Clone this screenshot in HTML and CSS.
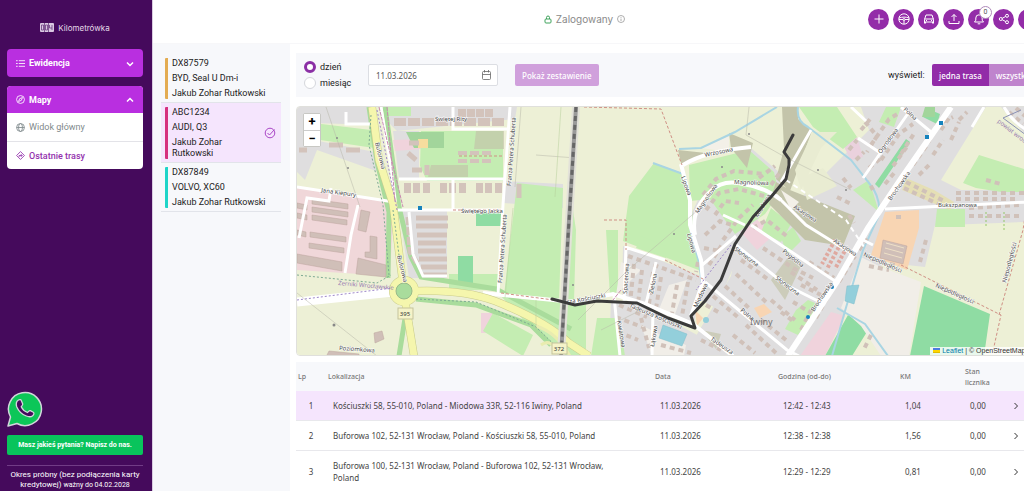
FILE: index.html
```html
<!DOCTYPE html>
<html lang="pl">
<head>
    <meta charset="UTF-8">
    <meta name="viewport" content="width=device-width, initial-scale=1.0">
    <title>Kilometrówka</title>
    <link rel="stylesheet" href="styles.css">
</head>
<body>
<div class="app">
    <aside class="sidebar">
        <div class="brand">
            <svg width="14" height="9" viewBox="0 0 14 9"><rect width="14" height="9" rx="1" fill="#d9c8e2"/><path d="M1.5 2h2v5h-2zM5.5 2h2v5h-2zM9.5 2v3h2.5M12 2v5M4.500 0v9M8.500 0v9" fill="none" stroke="#6b3a80" stroke-width=".8"/></svg>
            <span>Kilometrówka</span>
        </div>

        <nav>
            <div class="menu">
                <button class="menu-head" type="button">
                    <svg class="icon" viewBox="0 0 16 16"><path d="M5 3h11M5 8h11M5 13h11M0 3h3M0 8h3M0 13h3"/></svg>
                    <span>Ewidencja</span>
                    <svg class="chevron" viewBox="0 0 8 8"><path d="M1 3l3 3 3-3"/></svg>
                </button>
            </div>
            <div class="menu open">
                <button class="menu-head" type="button">
                    <svg class="icon" viewBox="0 0 16 16"><circle cx="8" cy="8" r="7"/><path d="M11.5 4.5l-2 5-5 2 2-5z"/></svg>
                    <span>Mapy</span>
                    <svg class="chevron" viewBox="0 0 8 8"><path d="M1 6l3-3 3 3"/></svg>
                </button>
                <a class="menu-link" href="#">
                    <svg class="icon" viewBox="0 0 16 16"><circle cx="8" cy="8" r="7"/><ellipse cx="8" cy="8" rx="3.5" ry="7"/><path d="M1 8h14"/></svg>
                    Widok główny
                </a>
                <a class="menu-link active" href="#">
                    <svg class="icon" viewBox="0 0 16 16"><path d="M8 1l7 7-7 7-7-7zM5.500 10.500V8h5M8.500 5.500L11 8l-2.500 2.500"/></svg>
                    Ostatnie trasy
                </a>
            </div>
        </nav>

        <div class="support">
            <a class="whatsapp" href="#" aria-label="WhatsApp">
                <svg width="36" height="36" viewBox="0 0 36 36"><path d="M1 35l2.500-9A16.500 16.500 0 1 1 10 32.500z" fill="#0cc658" stroke="#d3d5dc" stroke-width="1.5" stroke-linejoin="round"/><path d="M11.500 9c1.500-.8 2.500-.3 3 1l1.200 3c.3 1-1.200 2-1.500 2.800 1.300 2.800 3.300 4.600 6.300 5.700.9-.5 1.700-2.200 2.800-1.800l3 1.500c1.200.7.5 2.600-.6 3.500-1.800 1.500-4.200 1.200-6.400.3-4.300-1.700-7.700-4.700-9.500-9-.9-2.700-.8-5.500 1.700-7z" fill="#450a5c" stroke="#d3d5dc" stroke-width="1.3"/></svg>
            </a>
            <button class="ask" type="button">Masz jakieś pytania? Napisz do nas.</button>
            <p class="trial">Okres próbny (bez podłączenia karty kredytowej) <small>ważny do 04.02.2028</small></p>
        </div>
    </aside>

    <div class="page">
        <header class="topbar">
            <div class="status">
                <svg width="8" height="9" viewBox="0 0 8 9" fill="none" stroke="#3fa35c"><rect x="1" y="4" width="6" height="4" rx="1"/><path d="M2.500 4V2.500a1.500 1.500 0 0 1 3 0V4"/></svg>
                <span>Zalogowany</span>
                <svg width="8" height="8" viewBox="0 0 8 8" fill="none" stroke="#999" stroke-width=".8"><circle cx="4" cy="4" r="3.5"/><path d="M4 3.600V6M4 2v.8"/></svg>
            </div>
            <div class="actions">
                <button type="button" aria-label="Dodaj"><svg viewBox="0 0 12 12"><path d="M6 1.500v9M1.500 6h9"/></svg></button>
                <button type="button" aria-label="Kierowcy"><svg viewBox="0 0 12 12"><circle cx="6" cy="6" r="5.2"/><circle cx="6" cy="6.500" r="1"/><path d="M1 5c3-1.200 7-1.200 10 0M5 6.500H1M7 6.500h4M6 7.500V11"/></svg></button>
                <button type="button" aria-label="Pojazdy"><svg viewBox="0 0 12 12"><path d="M1.500 10.500v-4L3 2h6l1.500 4.500v4M1.500 6h9M1.500 9h9M3 7.500h1M8 7.500h1M2.500 9v1.500M9.500 9v1.500"/></svg></button>
                <button type="button" aria-label="Eksport"><svg viewBox="0 0 12 12"><path d="M6 8V1.500M3.500 4L6 1.500 8.500 4M1 8v2.500h10V8"/></svg></button>
                <button type="button" aria-label="Powiadomienia"><svg viewBox="0 0 12 12"><path d="M1.500 9h9L9.200 7.200V5a3.200 3.200 0 0 0-6.400 0v2.200zM4.700 10.800h2.600"/></svg><span class="badge">0</span></button>
                <button type="button" aria-label="Udostępnij"><svg viewBox="0 0 12 12"><circle cx="2.800" cy="6" r="1.5"/><circle cx="9" cy="2.800" r="1.5"/><circle cx="9" cy="9.200" r="1.5"/><path d="M4.200 5.300l3.400-1.800M4.200 6.700l3.400 1.800"/></svg></button>
                <button type="button" aria-label="Konto"><svg viewBox="0 0 12 12"><circle cx="6" cy="4" r="2"/><path d="M2 11c0-5 8-5 8 0"/></svg></button>
            </div>
        </header>

        <div class="columns">
            <section class="vehicles">
                <ul>
                    <li class="vehicle orange">
                        <div><p>DX87579</p><p>BYD, Seal U Dm-i</p><p>Jakub Zohar Rutkowski</p></div>
                    </li>
                    <li class="vehicle pink selected">
                        <div><p>ABC1234</p><p>AUDI, Q3</p><p>Jakub Zohar Rutkowski</p></div>
                        <svg class="check" viewBox="0 0 12 12"><circle cx="6" cy="6" r="4.8"/><path d="M3.500 6l2 2 5-5.500"/></svg>
                    </li>
                    <li class="vehicle cyan">
                        <div><p>DX87849</p><p>VOLVO, XC60</p><p>Jakub Zohar Rutkowski</p></div>
                    </li>
                </ul>
            </section>

            <main class="content">
                <form class="filters">
                    <div class="period">
                        <label><input type="radio" name="period" checked>dzień</label>
                        <label><input type="radio" name="period">miesiąc</label>
                    </div>
                    <div class="date-box">
                        <input type="text" value="11.03.2026" aria-label="Data">
                        <svg width="9" height="10" viewBox="0 0 9 10" fill="none" stroke="#666" stroke-width=".8"><rect x=".5" y="1.5" width="8" height="8" rx="1"/><path d="M.5 4.500h8M2.500 0v2.500M6.500 0v2.500"/></svg>
                    </div>
                    <button class="show" type="button">Pokaż zestawienie</button>
                    <span class="display-label">wyświetl:</span>
                    <div class="toggle">
                        <button class="on" type="button">jedna trasa</button>
                        <button type="button">wszystkie trasy</button>
                    </div>
                </form>

                <div class="map">
                    <svg class="tiles" viewBox="296 107 772 248" preserveAspectRatio="xMinYMin slice">
                        <rect x="296" y="107" width="772" height="249" fill="#edf0d6"/>

                        <!-- built-up areas -->
                        <g fill="#dfdedf">
                            <path d="M296 107h75l5 18-64-2-10 15 72 14 4 20-62-22-12 30-8-8z"/>
                            <path d="M386 107h130l-2 12-118 12-8-8zM392 131h26v47h-20z"/>
                            <path d="M503 181l59 3v24l-59-5zM398 210h48v68h-38z"/>
                            <path d="M690 215l10-22 50-45 35 30-40 60-30 70-40-20 25-10z"/>
                            <path d="M622 246l78 30-7 50-72-30zM610 300l30 5 60 32 30 19H608z"/>
                            <path d="M738 235l50-25 80-80-8-23h125l-45 73 20 10h64v32l-104 4-50 50-60 90h-70l-45-30 35-60z"/>
                            <path d="M1000 107h68v35l-44-8zM918 225h16l-10 42-18-2z"/>
                        </g>

                        <!-- industrial and retail -->
                        <path d="M296 188l97 15-4 73-93-6z" fill="#f0d7d9"/>
                        <path d="M392 140l28-1v10l-26 2zM740 232l16-12 18 14-18 16zM830 312l14 4-20 40h-25zM480 313h12v20h-12z" fill="#f0d3dc"/>
                        <path d="M842 145l14-8 6 20-12 3z" fill="#ead1dd"/>

                        <!-- grass -->
                        <g fill="#c4edb2">
                            <path d="M312 123l58 7 3 18-67-10z"/>
                            <path d="M382 107h28v9h-25zM420 131h82v50h-76l-7-15z"/>
                            <path d="M516 183l46 5-4 112-55-5z"/>
                            <path d="M653 163l28 10 9 18 2 35 8 45-78-30 6-45z"/>
                            <path d="M688 165l60-15 25 22 5 22-14 20-30 20-25-35-20 2z"/>
                            <path d="M798 107h38l20 30-14 12-30-22zM885 107h15l-7 20-15-5zM868 180l10 32-26-22z"/>
                            <path d="M978 155l90 28v9h-68l-25-4-13-5zM936 209h28v18h-30z"/>
                            <path d="M500 296l62 6-4 48-30-24zM492 313l40 22-10 21-40-25zM567 300l18 3v53h-25zM640 236l25 10v12l-30-10zM575 230l-2 72h-8l3-120z"/>
                            <path d="M448 274h50v16h-50zM795 310l12-10 12 5-22 30-13-6zM770 208l20 16-10 18-20-10zM605 230h12v65l-8 1z"/>
                            <path d="M780 237l12-10 8 14-14 14zM596 318h22l6 38h-34z"/>
                        </g>
                        <g fill="#8fdca3">
                            <path d="M905 139l4 3-31 46-4-4zM847 315l22 12-18 29h-27zM457 256h15v28h-15zM475 213h26v13h-26z"/>
                            <path d="M923 286l66 28-6 42h-74zM925 108l14 6-3 10-14-7z"/>
                        </g>
                        <path d="M405 132h38v16h-30zM924 107h10v10h-13z" fill="#a2d59b"/>
                        <path d="M417 139h10v9h-10z" fill="#f6dd9e"/>

                        <!-- scrub and farm yards -->
                        <g fill="#c3c4aa">
                            <path d="M677 150l28 3-24 14zM728 133l24 10-6 25-16-20z"/>
                            <path d="M781 107h16v12l14 12-22 60-14-12 8-30zM775 182l14 8 65 26-12 30-38-6-36-36z"/>
                            <path d="M430 165h37v12h-40zM475 131h28v18h-30zM770 280l18-24 12 10-16 34zM700 330l20 4-5 15z" opacity=".7"/>
                        </g>
                        <path d="M884 212l34-2v18l-12 42-36-15zM694 310l8 8-6 8zM753 308l10-4 8 8-12 6z" fill="#f8d5b3"/>
                        <path d="M860 257l20 10 40 15-12 74h-28l-20-30-20-18zM620 262l20 8-25 25zM668 285l18-5-14 40-16-6zM640 325l20 10 25 10-2 11h-32z" fill="#f1eee8"/>
                        <path d="M700 148l28-12v16zM780 190l18 12-8 8z" fill="#f3f0e8"/>
                        <path d="M905 178l28 12 20 12-4 8-48-20z" fill="#e5dfb5"/>
                        <path d="M836 132l-16 16-20 42-6-20 18-38zM800 178l22-10 14 18-30 14z" fill="#e9ecd2"/>

                        <!-- green verges -->
                        <g fill="none" stroke="#a9dc9c" stroke-width="5">
                            <path d="M368 107l8 55 12 50-1 66"/>
                            <path d="M384 107l14 100 12 50 10 20 75 12 75 40M415 299l60 6 55 20 20 20M398 356l8-50 8 50"/>
                        </g>

                        <!-- water -->
                        <g fill="none" stroke="#a9d5e3" stroke-width="2">
                            <path d="M797 107q-2 14 10 20l43 33 18 23q12 14 10 32l-16 35-9 30-22 76"/>
                            <path d="M836 308l28 16 23 32M678 149l22-1 34-16 42-25M652 163l30 11M690 200l-1 28 9 35 3 20"/>
                        </g>
                        <path d="M846 286l12-1-5 19-9-3zM662 325l24 9-5 12-23-8z" fill="#93cfdb" stroke="#7fbccb" stroke-width=".5"/>
                        <circle cx="705" cy="320" r="3" fill="#93cfdb"/>

                        <!-- large halls -->
                        <g fill="#d0bfb8" stroke="#bda49e" stroke-width=".5">
                            <path d="M311 199l36 5v5l-36-5zM311 207l36 5v5l-36-5zM311 215l35 5v5l-35-5zM309 232l36 5v5l-36-5zM308 243l35 5v5l-35-5z"/>
                            <path d="M296 203l10 2v5l-10-2zM296 213l10 2v5l-10-2zM296 230l9 2v5l-9-2zM296 254l45 8v9l-45-8zM360 210l9 2-4 20-8-2z"/>
                            <path d="M369 236l7 1v22l-12-2v-5h5zM357 258l28 7v12l-30-3z"/>
                            <path d="M373 333l8-2 2 8-9 4zM328 351l30 3v3h-33zM882 240l24 6-4 18-23-6z"/>
                        </g>
                        <path d="M885 243l18 5M884 248l18 5M883 253l18 5" stroke="#eee0c7" stroke-width="1"/>

                        <!-- houses, row by row -->
                        <g fill="none" stroke="#d3c3bb" stroke-width="5">
                            <path d="M393 122h112" stroke-width="8" stroke-dasharray="12 2"/>
                            <path d="M457 113h36" stroke-width="8" stroke-dasharray="8 1"/>
                            <path d="M403 188h101" stroke-width="10" stroke-dasharray="7 2 7 3 7 10"/>
                            <path d="M457 153h34M457 161h34" stroke-width="4" stroke-dasharray="9 3"/>
                            <path d="M415 218h32M415 226h32M416 235h30M417 243h28M417 251h28M418 259h28M420 267h26M422 275h24"/>
                            <path d="M407 217l2 35 8 12" stroke-width="5" stroke-dasharray="8 2"/>
                            <path d="M408 143h10M407 153l8 7M411 170h10M426 165v10M518 184v14M298 150h8M328 145h14M345 150h14"/>
                        </g>
                        <g fill="none" stroke="#d0c1b9" stroke-width="4" stroke-dasharray="5 4">
                            <path d="M702 195l13-16 18-8 30 3M705 210l13-17 20-4 25 7M714 215l10-14 14 2M704 235l15-14 12 4M722 240l16-22 14-13M758 178l16-12M770 185l10-14M703 248l16 3M708 265l14-22"/>
                            <path d="M627 256l68 24M633 264l-4 40M641 270l-4 34M652 272l-5 40M660 277l-6 38M687 282l-6 34M676 285l-5 28M697 262l-2 10"/>
                            <path d="M618 305l28 12M615 317l26 10M617 332l20 8M640 318l8 30M660 345l30 8M705 305l14 8M700 340l20 10M712 296l26 22M724 286l24 22M735 274l30 28M740 260l28 20M732 335l22 18M745 325l30 28M760 320l25 20M770 300l24 20"/>
                            <path d="M752 228l14-8 22 18M762 248l30 20 20 10M790 272l26 18M808 262l25 16M800 285l20 10M792 302l15 9M800 330l10-20M815 318l14-25M838 282l16-26M858 250l9-13M780 312l12 9"/>
                            <path d="M864 122l12 14-10 16M870 145l18-26 10-6M880 160l18-26 14-10M892 166l16-22M900 154l14-22M868 168l12-10M842 178l8 10M836 197l16 8M848 215l5 8M872 190l-4-8M884 184l10-12M860 130l10-12"/>
                            <path d="M912 165l14-20 10-20 16-8M918 175l12-12M932 155l10-15M950 140l8-18M940 130l8-12M958 120l8-8M955 193h70M955 199h60M985 180l15 4M968 208l50-3M968 216h50M895 217h8M925 240l-6 22M868 266l20 4M880 262l18 4"/>
                            <path d="M905 182l40 20M903 188l34 16M1008 112l14 12M1015 108l9 8M848 150l8-10M855 160l8-8M870 335l-8 16"/>
                        </g>
                        <path d="M840 243l-14 26M834 240l-13 24M846 247l-12 22" stroke="#dfa9a0" stroke-width="4" stroke-dasharray="3 2" fill="none"/>

                        <!-- local roads -->
                        <g fill="none" stroke="#fff" stroke-width="3">
                            <path d="M296 187l97 15M396 210h107M452 107v22h55M509 107l-7 98-5 90M398 179h105M452 179v30M408 212l4 42 10 22h24"/>
                            <path d="M296 302l96-10" stroke-width="9"/>
                            <path d="M380 107l10 60 5 40M330 188l-2 13-22-3-8 40M357 205l-7 30-6 38M345 112v12h24"/>
                            <path d="M482 293l90 9 40-8 32 10 48 20 40 32" stroke-width="4"/>
                            <path d="M680 164l9 36 0 25 11 35 2 22-12 34M682 165q22-14 68-18M694 235q-5-25 16-44 12-12 32-7 22 3 38 16" stroke-width="4"/>
                            <path d="M625 246l-2 58M624 247l40 13M655 262l-10 42M613 296l6 60M652 310l-1 46M704 282l82 68 12 6"/>
                            <path d="M735 245l50 40 36 18M750 225l60 40 24 16M775 195l30 30 45 28M700 266l35-30M722 215l22 10"/>
                            <path d="M950 107l-50 72-33 49-30 52-50 76" stroke-width="6"/>
                            <path d="M908 112l-46 66M900 107l30 25M884 209l184-9M810 130l-30 52M857 138l24 16M850 107l15 14M983 107l-12 20M872 245l-12-6"/>
                            <path d="M785 180l60 40 20 30" stroke-width="2" stroke-dasharray="5 4"/>
                            <path d="M1003 107q12 22 40 30"/>
                        </g>

                        <!-- main road with the roundabout -->
                        <g fill="none" stroke="#c9cb8e" stroke-width="8">
                            <path d="M371 107l7 53 14 44 5 40 5 40M412 291q50-2 82 10 50 20 74 42l20 13M404 300l9 56"/>
                            <circle cx="403" cy="291" r="11"/>
                        </g>
                        <g fill="none" stroke="#f5f6ad" stroke-width="7">
                            <path d="M371 107l7 53 14 44 5 40 5 40M412 291q50-2 82 10 50 20 74 42l20 13M404 300l9 56"/>
                            <circle cx="403" cy="291" r="11"/>
                        </g>
                        <circle cx="403" cy="291" r="8" fill="#a9dc9c" stroke="#98ba8b"/>
                        <path d="M535 326q20 6 34 30M540 345q10-8 20 11" fill="none" stroke="#e9ecb0" stroke-width="3"/>

                        <!-- paths and boundaries -->
                        <g fill="none" stroke-width="1">
                            <path d="M583 107l77 2 21 56M458 156h44M603 220h22v30M900 265l100 50-8 36h20M998 315l24-85 6-40M664 260l40 20M500 293l60 8M452 210h48" stroke="#cf8f84" stroke-dasharray="3 2"/>
                            <path d="M296 300l95-12M730 245l-35 45M376 110l12 60 8 40" stroke="#9d86c9" stroke-dasharray="2 2"/>
                            <path d="M370 115l-2 30 14 60 6 70M392 210l8 60M415 299l60 3 60 25 30 29M296 275l80 8 14-8" stroke="#7eaa93" stroke-dasharray="2 2"/>
                            <path d="M378 107l24 100M386 107l8 95M620 290l-8 10" stroke="#c88bb0" stroke-dasharray="4 1"/>
                            <path d="M325 107l34 100M296 293l80 63M748 107l-3 28 39 22M577 320l50-50 70-60M790 160l60 30M535 155l40 3M520 107l-6 80M600 330l40-20" stroke="#b6b6a8" stroke-width=".5"/>
                            <path d="M1003 212v20M985 212v15" stroke="#94c866" stroke-dasharray="2 2"/>
                            <path d="M1020 110l-18 8 54 40" stroke="#8b92b5"/>
                            <path d="M512 208l-8 90M535 300v30M560 107l-6 90" stroke="#b5cf9b" stroke-width=".5"/>
                        </g>

                        <!-- railway -->
                        <path d="M575 107l-8 130-7 119" fill="none" stroke="#e3e2d9" stroke-width="8"/>
                        <path d="M575 107l-8 130-7 119" fill="none" stroke="#9a9a9a" stroke-width="4"/>
                        <path d="M575 107l-8 130-7 119" fill="none" stroke="#666" stroke-width="3" stroke-dasharray="5 4"/>

                        <!-- stops -->
                        <g fill="#1683bd">
                            <path d="M417 206h4v4h-4zM938 121h4v4h-4zM924 135h4v4h-4z"/>
                            <circle cx="831" cy="287" r="2"/><circle cx="807" cy="317" r="2"/>
                        </g>
                        <g fill="#888"><circle cx="336" cy="138" r="1"/><circle cx="347" cy="168" r="1"/><circle cx="333" cy="325" r="1.5"/><circle cx="748" cy="134" r="1"/><circle cx="721" cy="167" r="1"/><circle cx="817" cy="170" r="1"/><circle cx="845" cy="190" r="1"/><circle cx="572" cy="285" r="1"/><circle cx="673" cy="234" r="1"/></g>

                        <g class="street">
                            <text x="434" y="121">Świętej Rity</text>
                            <text x="460" y="213">Świętego Jacka</text>
                            <text transform="translate(320 192) rotate(8)">Jana Kiepury</text>
                            <text transform="translate(510 186) rotate(-86)">Franza Petera Schuberta</text>
                            <text transform="translate(501 283) rotate(-86)">Franza Petera Schuberta</text>
                            <text transform="translate(374 143) rotate(76)">Buforowa</text>
                            <text transform="translate(396 256) rotate(76)">Buforowa</text>
                            <text transform="translate(338 350) rotate(4)">Poziomkowa</text>
                            <text transform="translate(704 157) rotate(-12)">Wrzosowa</text>
                            <text transform="translate(733 184) rotate(2)">Magnoliowa</text>
                            <text transform="translate(697 214) rotate(-55)">Magnoliowa</text>
                            <text transform="translate(680 177) rotate(70)">Lipowa</text>
                            <text transform="translate(686 234) rotate(75)">Lipowa</text>
                            <text transform="translate(757 218) rotate(-60)">Miodowa</text>
                            <text transform="translate(696 308) rotate(-65)">Miodowa</text>
                            <text transform="translate(792 208) rotate(33)">Akacjowa</text>
                            <text transform="translate(832 242) rotate(33)">Akacjowa</text>
                            <text transform="translate(781 252) rotate(38)">Pogodna</text>
                            <text transform="translate(733 250) rotate(37)">Słoneczna</text>
                            <text transform="translate(774 279) rotate(37)">Słoneczna</text>
                            <text transform="translate(739 311) rotate(40)">Polna</text>
                            <text transform="translate(902 110) rotate(42)">Polna</text>
                            <text transform="translate(880 154) rotate(-54)">Ogrodowa</text>
                            <text transform="translate(890 201) rotate(-55)">Brochowska</text>
                            <text transform="translate(813 312) rotate(-56)">Brochowska</text>
                            <text x="937" y="207">Bukszpanowa</text>
                            <text transform="translate(862 256) rotate(24)">Niepodległości</text>
                            <text transform="translate(934 287) rotate(24)">Niepodległości</text>
                            <text transform="translate(1005 283) rotate(-75)">Niepodległości</text>
                            <text transform="translate(566 304) rotate(-10)">sza Kościuszki</text>
                            <text transform="translate(628 307) rotate(23)">Tadeusza Kościuszki</text>
                            <text transform="translate(626 294) rotate(-86)">Spacerowa</text>
                            <text transform="translate(652 294) rotate(-78)">Zielona</text>
                            <text transform="translate(653 347) rotate(-80)">Łąkowa</text>
                            <text transform="translate(616 321) rotate(80)">Kwiatowa</text>
                            <text transform="translate(709 340) rotate(34)">Tadeusza</text>
                        </g>
                        <text class="district" transform="translate(337 285) rotate(5)">Żerniki Wrocławskie</text>
                        <text class="district" transform="translate(996 122) rotate(38)">powiat wrocławski</text>

                        <!-- driven route -->
                        <path class="route" d="M551 299L574 305L596 301L636 303L667 318L694 328L690 316L704 301L720 280L734 244L752 217L770 197L785 179L788 165L788 159L783 152L792 135"/>

                        <text class="village" x="749" y="325">Iwiny</text>
                        <g class="shield">
                            <rect x="397" y="308" width="15" height="11"/><text x="404" y="316">395</text>
                            <rect x="551" y="343" width="15" height="11"/><text x="558" y="351">372</text>
                        </g>
                    </svg>
                    <div class="map-zoom">
                        <button type="button" aria-label="Przybliż">+</button>
                        <button type="button" aria-label="Oddal">−</button>
                    </div>
                    <div class="attribution">
                        <svg width="7" height="5" viewBox="0 0 7 5"><path fill="#4c7be1" d="M0 0h7v2H0z"/><path fill="#ffd500" d="M0 2h7v2H0z"/><path fill="#e0bc00" d="M0 4h7v1H0z"/></svg>
                        <a href="#">Leaflet</a> | © OpenStreetMap contributors
                    </div>
                </div>

                <table class="routes">
                    <thead>
                        <tr><th class="col-lp">Lp</th><th class="col-place">Lokalizacja</th><th class="col-date">Data</th><th class="col-time">Godzina (od-do)</th><th class="col-km">KM</th><th class="col-meter">Stan licznika</th><th></th></tr>
                    </thead>
                    <tbody>
                        <tr class="current"><td>1</td><td>Kościuszki 58, 55-010, Poland - Miodowa 33R, 52-116 Iwiny, Poland</td><td>11.03.2026</td><td>12:42 - 12:43</td><td>1,04</td><td>0,00</td><td><button type="button" aria-label="Szczegóły"><svg viewBox="0 0 8 8"><path d="M2.500 1l3 3-3 3"/></svg></button></td></tr>
                        <tr><td>2</td><td>Buforowa 102, 52-131 Wrocław, Poland - Kościuszki 58, 55-010, Poland</td><td>11.03.2026</td><td>12:38 - 12:38</td><td>1,56</td><td>0,00</td><td><button type="button" aria-label="Szczegóły"><svg viewBox="0 0 8 8"><path d="M2.500 1l3 3-3 3"/></svg></button></td></tr>
                        <tr><td>3</td><td>Buforowa 100, 52-131 Wrocław, Poland - Buforowa 102, 52-131 Wrocław, Poland</td><td>11.03.2026</td><td>12:29 - 12:29</td><td>0,81</td><td>0,00</td><td><button type="button" aria-label="Szczegóły"><svg viewBox="0 0 8 8"><path d="M2.500 1l3 3-3 3"/></svg></button></td></tr>
                    </tbody>
                </table>
            </main>
        </div>
    </div>
</div>
</body>
</html>
```
FILE: styles.css
```css
* {
    box-sizing: border-box;
}
body {
    margin: 0;
    font-family: Roboto, sans-serif;
    font-size: 9px;
    color: #222;
    background: #fff;
}
button, input {
    font: inherit;
    color: inherit;
}
button {
    border: none;
    padding: 0;
    cursor: pointer;
}
p, ul {
    margin: 0;
    padding: 0;
    list-style: none;
}
.app {
    display: flex;
    height: 100vh;
    overflow: hidden;
}

/* sidebar */
.sidebar {
    flex: none;
    width: 153px;
    padding: 22px 9px 1px 7px;
    background: #450a5c;
    border-right: 1px solid #d9cce0;
    color: #fff;
    display: flex;
    flex-direction: column;
}
.brand {
    display: flex;
    justify-content: center;
    align-items: center;
    gap: 4px;
    height: 11px;
    margin-bottom: 16px;
    font-family: Inter, sans-serif;
    font-size: 8px;
    color: #e6dbea;
}
.menu {
    margin-bottom: 9px;
    border-radius: 4px;
    overflow: hidden;
    background: #fff;
}
.menu-head {
    display: flex;
    align-items: center;
    gap: 4px;
    width: 100%;
    height: 28px;
    padding: 0 9px;
    background: #b92fe0;
    color: #fff;
    font-weight: 700;
}
.menu.open .menu-head {
    height: 27px;
}
.icon, .chevron {
    flex: none;
    width: 9px;
    height: 9px;
    fill: none;
    stroke: currentColor;
    stroke-width: 1.5;
}
.chevron {
    width: 8px;
    margin-left: auto;
}
.menu-link {
    display: flex;
    align-items: center;
    gap: 4px;
    height: 28px;
    padding: 0 9px;
    color: #7f8a8c;
    text-decoration: none;
}
.menu-link.active {
    border-top: 1px solid #e3e3e8;
    color: #9331ad;
    font-weight: 500;
}
.support {
    margin-top: auto;
}
.whatsapp, .whatsapp svg {
    display: block;
}
.ask {
    width: 100%;
    height: 20px;
    margin: 8px 0 10px;
    border-radius: 2px;
    background: #09c45c;
    color: #fff;
    font-size: 7px;
    font-weight: 700;
}
.trial {
    padding-top: 4px;
    border-top: 1px solid #713c86;
    font-size: 8px;
    line-height: 10px;
    text-align: center;
}
.trial small {
    font-size: 7px;
}

/* top bar */
.page {
    flex: 1;
    min-width: 0;
    display: flex;
    flex-direction: column;
}
.topbar {
    flex: none;
    display: grid;
    grid-template-columns: 1fr auto 1fr;
    align-items: center;
    height: 44px;
    padding: 0 8px 5px 0;
    border-bottom: 1px solid #f7f7f9;
}
.status {
    grid-column: 2;
    display: flex;
    align-items: center;
    gap: 4px;
    font-family: Inter, sans-serif;
    font-size: 10px;
    color: #8a8a8a;
}
.actions {
    display: flex;
    justify-self: end;
    gap: 4px;
    margin-right: -23px;
}
.actions button {
    position: relative;
    display: flex;
    align-items: center;
    justify-content: center;
    width: 21px;
    height: 21px;
    border-radius: 50%;
    background: #932ca8;
}
.actions svg {
    width: 12px;
    height: 12px;
    fill: none;
    stroke: #fff;
}
.badge {
    position: absolute;
    top: -3px;
    right: -3px;
    width: 13px;
    height: 13px;
    border: 1px solid #b08abb;
    border-radius: 50%;
    background: #fff;
    color: #555;
    font-size: 7px;
    line-height: 11px;
    text-align: center;
}
.columns {
    flex: 1;
    display: flex;
}

/* vehicles */
.vehicles {
    flex: none;
    width: 137px;
    padding: 10px 9px 0 8px;
    background: #f7f8fb;
}
.vehicle {
    display: flex;
    align-items: center;
    padding: 4px 5px 3px 4px;
    border-bottom: 1px solid #e2e4ea;
}
.vehicle.selected {
    background: #f5e5fd;
}
.vehicle div {
    flex: 1;
    padding-left: 4px;
    border-left: 3px solid;
    border-radius: 1px;
    line-height: 11px;
}
.vehicle p + p {
    margin-top: 4px;
}
.orange div {
    border-color: #e3ac52;
}
.pink div {
    border-color: #d6307e;
}
.cyan div {
    border-color: #1fd5c8;
}
.vehicle p {
    color: #222;
}
.check {
    width: 12px;
    height: 12px;
    margin-left: 12px;
    fill: none;
    stroke: #a945c6;
}

/* filters */
.content {
    flex: 1;
    min-width: 778px;
    padding: 9px 0 0 6px;
}
.filters {
    display: flex;
    align-items: center;
    height: 44px;
    padding-left: 8px;
    background: #f7f8fb;
}
.period {
    width: 64px;
}
.period label {
    display: flex;
    align-items: center;
    gap: 4px;
    height: 16px;
}
.period input {
    appearance: none;
    width: 12px;
    height: 12px;
    margin: 0;
    border: 1px solid #d5d7dc;
    border-radius: 50%;
    background: #fff;
}
.period input:checked {
    border: 3px solid #8b2fa5;
}
.date-box {
    display: flex;
    align-items: center;
    width: 130px;
    height: 22px;
    padding: 0 6px 0 7px;
    border: 1px solid #dcdee3;
    border-radius: 2px;
    background: #fff;
    font-family: "Noto Sans", sans-serif;
    font-size: 8px;
    color: #555;
}
.date-box input {
    flex: 1;
    min-width: 0;
    padding: 0;
    border: none;
    outline: none;
    background: none;
}
.show, .toggle button {
    height: 22px;
    padding: 0 7px;
    font-family: "Noto Sans", sans-serif;
    font-size: 8px;
    font-weight: 500;
    color: #fff;
    white-space: nowrap;
}
.show {
    margin-left: 17px;
    border-radius: 2px;
    background: #d0a0dc;
}
.display-label {
    width: 44px;
    margin-left: auto;
}
.toggle {
    display: flex;
    width: 136px;
    border-radius: 2px;
    overflow: hidden;
}
.toggle button {
    flex: 1;
    background: #bf84cd;
    text-align: left;
}
.toggle .on {
    flex: none;
    background: #922ca8;
}

/* map */
.map {
    position: relative;
    height: 250px;
    margin-top: 9px;
    border: 1px solid #e0e0dc;
    border-radius: 4px;
    overflow: hidden;
}
.tiles {
    display: block;
    width: 100%;
    height: 100%;
}
.route {
    fill: none;
    stroke: #3b3b3b;
    stroke-width: 3;
    stroke-linecap: round;
    stroke-linejoin: round;
}
.street {
    font-family: "Noto Sans", sans-serif;
    font-size: 6px;
    fill: #444;
    stroke: #fff;
    stroke-width: 1px;
    paint-order: stroke;
}
.district {
    font-family: "Noto Sans", sans-serif;
    font-size: 6px;
    fill: #977bb0;
}
.village {
    font-family: "Noto Sans", sans-serif;
    font-size: 9px;
    fill: #777;
}
.shield rect {
    fill: #f5f3c9;
    stroke: #c5c39b;
}
.shield text {
    font-family: "Noto Sans", sans-serif;
    font-size: 6px;
    text-anchor: middle;
    fill: #333;
}
.map-zoom {
    position: absolute;
    top: 6px;
    left: 6px;
    border: 1px solid #c8c8c4;
    border-radius: 2px;
}
.map-zoom button {
    display: block;
    width: 16px;
    height: 16px;
    background: #fff;
    color: #000;
    font-size: 13px;
    font-weight: 700;
    line-height: 16px;
}
.map-zoom button + button {
    border-top: 1px solid #ccc;
}
.attribution {
    position: absolute;
    right: 0;
    bottom: 0;
    padding: 0 3px;
    background: rgba(255, 255, 255, 0.8);
    font-family: "Liberation Sans", Arial, sans-serif;
    font-size: 7px;
    line-height: 8px;
    color: #333;
}
.attribution a {
    color: #0078a8;
    text-decoration: none;
}

/* routes */
.routes {
    width: 100%;
    margin-top: 6px;
    table-layout: fixed;
    border-collapse: collapse;
    font-family: "Noto Sans", sans-serif;
    font-size: 8px;
    line-height: 12px;
    color: #444;
}
.routes th {
    height: 29px;
    padding: 2px;
    background: #f7f8fb;
    color: #777;
    font-size: 7px;
    font-weight: 500;
    line-height: 11px;
    text-align: left;
}
.routes td {
    padding: 9px 7px 8px;
    border-bottom: 1px solid #e8e8ec;
}
.routes td:first-child {
    text-align: center;
}
.routes .current td {
    background: #f5e5fd;
}
.col-lp {
    width: 30px;
}
.col-place {
    width: 327px;
}
.col-date {
    width: 123px;
}
.col-time {
    width: 122px;
}
.col-km {
    width: 65px;
}
.col-meter {
    width: 42px;
}
.routes th.col-meter {
    padding-right: 10px;
}
.routes td:nth-child(2) {
    padding-right: 30px;
}
.routes td button {
    display: block;
    background: none;
}
.routes td svg {
    display: block;
    width: 8px;
    height: 8px;
    fill: none;
    stroke: #333;
}
```
